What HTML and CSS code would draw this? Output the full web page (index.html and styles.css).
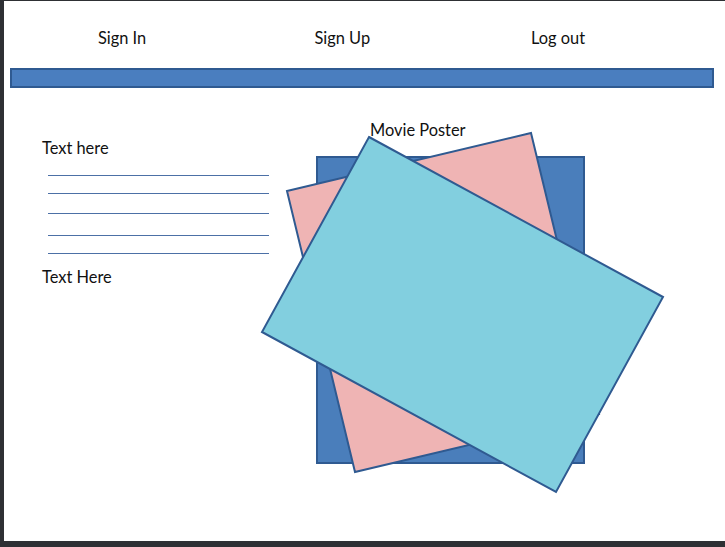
FILE: index.html
```html
<!DOCTYPE html>
<html lang="en">
<head>
<meta charset="utf-8">
<title>Movie wireframe</title>
<link rel="stylesheet" href="styles.css">
</head>
<body>
<div class="page">
  <nav class="nav">
    <a class="nav-item">Sign In</a>
    <a class="nav-item">Sign Up</a>
    <a class="nav-item">Log out</a>
  </nav>
  <div class="bar"></div>
  <main class="content">
    <section class="info">
      <p class="label">Text here</p>
      <div class="lines">
        <div class="line l1"></div>
        <div class="line l2"></div>
        <div class="line l3"></div>
        <div class="line l4"></div>
        <div class="line l5"></div>
      </div>
      <p class="label label-2">Text Here</p>
    </section>
    <section class="poster">
      <svg class="poster-svg" width="410" height="380" viewBox="0 0 410 380" xmlns="http://www.w3.org/2000/svg">
        <rect x="59" y="39" width="267" height="306" fill="#4a7ebb" stroke="#2f5a91" stroke-width="2"/>
        <polygon points="29,73 273,15 341,296 97,354" fill="#efb4b4" stroke="#2f5a91" stroke-width="2" stroke-linejoin="miter"/>
        <polygon points="111,19 405,179 298,374 4,214" fill="#82cfdf" stroke="#2f5a91" stroke-width="2" stroke-linejoin="miter"/>
      </svg>
      <span class="poster-label">Movie Poster</span>
    </section>
  </main>
</div>
</body>
</html>
```

FILE: styles.css
```css
html, body {
  margin: 0;
  padding: 0;
}

body {
  background: #2e3034;
  font-family: Lato, "Open Sans", "Liberation Sans", sans-serif;
  color: #111;
  width: 725px;
  height: 547px;
  overflow: hidden;
}

.page {
  background: #ffffff;
  margin: 1px 0 6px 4px;
  width: 721px;
  height: 540px;
  display: flex;
  flex-direction: column;
}

.nav {
  display: flex;
  padding: 27px 0 0 94px;
  height: 21px;
}

.nav-item {
  flex: 0 0 auto;
  width: 216.5px;
  font-size: 16.4px;
  line-height: 20px;
  color: #111;
}

.bar {
  margin: 19px 0 0 6px;
  width: 700px;
  height: 16px;
  background: #4a7ebf;
  border: 2px solid #2f5a91;
}

.content {
  display: flex;
  padding-top: 30px;
}

.info {
  flex: 0 0 auto;
  width: 216px;
  padding-left: 38px;
  padding-top: 20px;
}

.label {
  margin: 0;
  font-size: 16.4px;
  line-height: 20px;
}

.lines {
  margin-left: 6px;
  padding-top: 17px;
  display: flex;
  flex-direction: column;
}

.line {
  width: 221px;
  height: 1px;
  background: #4c70a6;
}

.l2 { margin-top: 17px; }
.l3 { margin-top: 19px; }
.l4 { margin-top: 21px; }
.l5 { margin-top: 17px; }

.label-2 {
  margin-top: 13px;
}

.poster {
  position: relative;
  flex: 0 0 auto;
  width: 410px;
  height: 380px;
}

.poster-svg {
  display: block;
}

.poster-label {
  position: absolute;
  left: 112px;
  top: 2px;
  font-size: 16.4px;
  line-height: 20px;
}
```
